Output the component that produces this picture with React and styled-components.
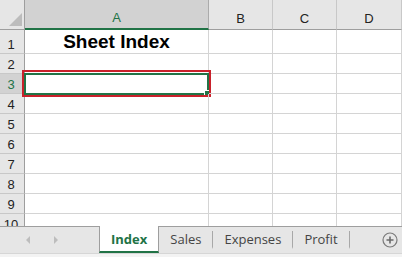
import styled, { createGlobalStyle } from 'styled-components';

const GlobalStyle = createGlobalStyle`
  html, body { margin: 0; padding: 0; background: #fff; }
  body { width: 402px; height: 257px; overflow: hidden; font-family: "Open Sans", "Noto Sans", sans-serif; }
  * { box-sizing: border-box; }
`;

const columns = ['A', 'B', 'C', 'D'];
const rows = [1, 2, 3, 4, 5, 6, 7, 8, 9, 10];
const tabs = ['Index', 'Sales', 'Expenses', 'Profit'];

export default function App() {
  return (
    <Workbook>
      <GlobalStyle />
      <Sheet>
        <Corner><CornerMark /></Corner>
        {columns.map((c) => (
          <ColHeader key={c} $active={c === 'A'}>{c}</ColHeader>
        ))}
        {rows.map((r) => (
          <Row key={r} $first={r === 1}>
            <RowHeader $active={r === 3}>{r}</RowHeader>
            {columns.map((c) => (
              <Cell key={c}>
                {r === 1 && c === 'A' && <Title>Sheet Index</Title>}
                {r === 3 && c === 'A' && (
                  <>
                    <Highlight />
                    <Selection><FillHandle /></Selection>
                  </>
                )}
              </Cell>
            ))}
          </Row>
        ))}
      </Sheet>
      <TabBar>
        <NavArrows>
          <Arrow viewBox="0 0 6 10"><path d="M5 1 L1 5 L5 9 Z" /></Arrow>
          <Arrow viewBox="0 0 6 10"><path d="M1 1 L5 5 L1 9 Z" /></Arrow>
        </NavArrows>
        <Tabs>
          {tabs.map((t) => (
            <Tab key={t} $active={t === 'Index'}>{t}</Tab>
          ))}
        </Tabs>
        <AddButton viewBox="0 0 16 16">
          <circle cx="8" cy="8" r="7" fill="none" stroke="#7a7a7a" strokeWidth="1.2" />
          <path d="M8 4.5 V11.5 M4.5 8 H11.5" stroke="#6a6a6a" strokeWidth="1.6" />
        </AddButton>
      </TabBar>
      <StatusStrip />
    </Workbook>
  );
}

const Workbook = styled.div`
  width: 402px;
  height: 257px;
  display: flex;
  flex-direction: column;
  background: #fff;
`;

const Sheet = styled.div`
  height: 226px;
  overflow: hidden;
  display: grid;
  grid-template-columns: 25px 184px 64px 64px 65px;
  grid-template-rows: 30px;
  grid-auto-rows: min-content;
`;

const Row = styled.div`
  display: contents;
  & > * { height: ${(p) => (p.$first ? 24 : 20)}px; }
`;

const Corner = styled.div`
  background: #e6e6e6;
  border-right: 1px solid #9e9e9e;
  border-bottom: 1px solid #9e9e9e;
  position: relative;
`;

const CornerMark = styled.div`
  position: absolute;
  right: 2px;
  bottom: 3px;
  width: 0;
  height: 0;
  border-left: 13px solid transparent;
  border-bottom: 13px solid #bcbcbc;
`;

const ColHeader = styled.div`
  display: flex;
  align-items: center;
  justify-content: center;
  padding-top: 7px;
  font-family: "Liberation Sans", Arial, sans-serif;
  font-size: 13px;
  color: ${(p) => (p.$active ? '#217346' : '#222')};
  background: ${(p) => (p.$active ? '#d2d2d2' : '#e6e6e6')};
  border-right: 1px solid ${(p) => (p.$active ? '#ababab' : '#c8c8c8')};
  border-bottom: ${(p) => (p.$active ? '2px solid #217346' : '1px solid #9e9e9e')};
`;

const RowHeader = styled.div`
  display: flex;
  align-items: flex-end;
  justify-content: center;
  padding-bottom: 1px;
  padding-right: 2px;
  font-family: "Liberation Sans", Arial, sans-serif;
  font-size: 13px;
  color: ${(p) => (p.$active ? '#217346' : '#222')};
  background: ${(p) => (p.$active ? '#d2d2d2' : '#e6e6e6')};
  border-right: 1px solid #9e9e9e;
  border-bottom: 1px solid #c8c8c8;
`;

const Cell = styled.div`
  position: relative;
  border-right: 1px solid #d4d4d4;
  border-bottom: 1px solid #d4d4d4;
  display: flex;
  align-items: center;
  justify-content: center;
`;

const Title = styled.span`
  font-family: "Liberation Sans", Arial, sans-serif;
  font-weight: bold;
  font-size: 19px;
  color: #000;
  margin-top: 1px;
`;

const Selection = styled.div`
  position: absolute;
  left: -1px;
  top: -1px;
  right: -1px;
  bottom: -2px;
  border: 2px solid #217346;
`;

const FillHandle = styled.div`
  position: absolute;
  right: -2px;
  bottom: -2px;
  width: 5px;
  height: 5px;
  background: #217346;
  border-left: 1px solid #fff;
  border-top: 1px solid #fff;
`;

const Highlight = styled.div`
  position: absolute;
  left: -3px;
  top: -4px;
  right: -3px;
  bottom: -4px;
  border: 2px solid #c9212b;
`;

const TabBar = styled.div`
  height: 27px;
  display: flex;
  align-items: stretch;
  background: #e6e6e6;
  border-top: 1px solid #9e9e9e;
`;

const NavArrows = styled.div`
  width: 99px;
  display: flex;
  align-items: center;
  gap: 22px;
  padding-left: 25px;
`;

const Arrow = styled.svg`
  width: 6px;
  height: 10px;
  fill: #bdbdbd;
`;

const Tabs = styled.div`
  display: flex;
  align-items: stretch;
`;

const Tab = styled.div`
  display: flex;
  align-items: center;
  justify-content: center;
  padding: 0 11px;
  margin-top: -1px;
  font-family: "Open Sans", "Noto Sans", sans-serif;
  font-size: 13px;
  font-weight: ${(p) => (p.$active ? 700 : 400)};
  color: ${(p) => (p.$active ? '#217346' : '#444')};
  background: ${(p) => (p.$active ? '#fff' : 'transparent')};
  border-left: ${(p) => (p.$active ? '1px solid #9e9e9e' : 'none')};
  border-right: 1px solid ${(p) => (p.$active ? '#9e9e9e' : '#a8a8a8')};
  border-bottom: ${(p) => (p.$active ? '2px solid #217346' : '2px solid transparent')};
  ${(p) => !p.$active && 'margin-bottom: 4px; margin-top: 4px;'}
`;

const AddButton = styled.svg`
  width: 16px;
  height: 16px;
  align-self: center;
  margin-left: auto;
  margin-right: 4px;
`;

const StatusStrip = styled.div`
  flex: 1;
  background: #f3f3f3;
  border-top: 1px solid #d6d6d6;
`;
